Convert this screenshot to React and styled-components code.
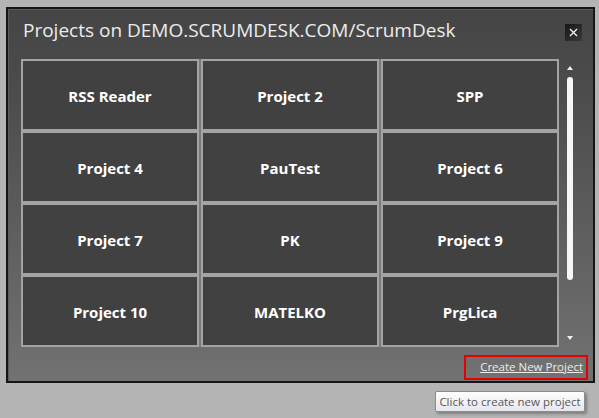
import styled, { createGlobalStyle } from 'styled-components';

const GlobalStyle = createGlobalStyle`
    html, body {
        margin: 0;
        padding: 0;
        background: #b4b4b4;
    }
    body {
        font-family: "Open Sans", "Noto Sans", sans-serif;
    }
`

const Page = styled.div`
    position: relative;
    width: 599px;
    height: 418px;
    padding: 7px 0 0 6px;
    box-sizing: border-box;
`

const Window = styled.div`
    width: 589px;
    height: 376px;
    box-sizing: border-box;
    border: 2px solid #161616;
    box-shadow: inset 1px 1px 0 #5c5c5c;
    background: linear-gradient(to bottom, #454545 0%, #4d4d4d 25%, #727272 100%);
    display: flex;
    flex-direction: column;
`

const Header = styled.div`
    height: 50px;
    display: flex;
    justify-content: space-between;
    align-items: flex-start;
    padding: 0 11px 0 15px;
`

const Title = styled.h1`
    margin: 9px 0 0;
    font-size: 19px;
    line-height: 24px;
    font-weight: 400;
    color: #ececec;
`

const CloseButton = styled.button`
    margin-top: 15px;
    width: 17px;
    height: 17px;
    padding: 0;
    border: none;
    background: linear-gradient(135deg, #161616 0%, #2c2c2c 60%, #383838 100%);
    display: flex;
    align-items: center;
    justify-content: center;
`

const Body = styled.div`
    display: flex;
    height: 288px;
    padding-left: 13px;
`

const Grid = styled.div`
    display: grid;
    grid-template-columns: repeat(3, 178px);
    grid-auto-rows: 72px;
    column-gap: 2px;
    align-content: start;
    background: linear-gradient(to right, transparent 178px, #7c7c7c 178px, #7c7c7c 180px, transparent 180px, transparent 358px, #7c7c7c 358px, #7c7c7c 360px, transparent 360px);
    height: 288px;
`

const Tile = styled.div`
    box-sizing: border-box;
    border: 2px solid #a3a3a3;
    background: #414141;
    display: flex;
    align-items: center;
    justify-content: center;
    color: #ffffff;
    font-weight: 700;
    font-size: 15px;
    padding-top: 2px;
`

const Scrollbar = styled.div`
    width: 7px;
    margin-left: 7px;
    display: flex;
    flex-direction: column;
    align-items: center;
    padding-top: 7px;
`

const Arrow = styled.div`
    width: 0;
    height: 0;
    border-left: 3px solid transparent;
    border-right: 3px solid transparent;
    ${p => p.$down
        ? 'border-top: 4px solid #f0f0f0; margin-top: 56px;'
        : 'border-bottom: 4px solid #f0f0f0;'}
`

const Thumb = styled.div`
    margin-top: 7px;
    width: 6px;
    height: 203px;
    border-radius: 3px;
    background: #f6f6f6;
`

const Footer = styled.div`
    display: flex;
    justify-content: flex-end;
    padding: 8px 5px 0 0;
`

const LinkBox = styled.div`
    width: 124px;
    height: 25px;
    box-sizing: border-box;
    border: 2px solid #e60000;
    display: flex;
    align-items: center;
    justify-content: flex-end;
    padding: 0 3px 2px 0;
`

const Link = styled.a`
    font-size: 11.5px;
    color: #ececec;
    text-decoration: underline;
    cursor: pointer;
`

const Tooltip = styled.div`
    position: absolute;
    left: 435px;
    top: 391px;
    width: 150px;
    height: 21px;
    box-sizing: border-box;
    border: 1px solid #8c8c8c;
    border-radius: 2px;
    background: linear-gradient(to bottom, #ffffff 0%, #e6e6ee 100%);
    box-shadow: 2px 2px 3px rgba(0, 0, 0, 0.3);
    color: #575757;
    font-size: 11.5px;
    display: flex;
    align-items: center;
    justify-content: center;
`

const projects = [
    'RSS Reader', 'Project 2', 'SPP',
    'Project 4', 'PauTest', 'Project 6',
    'Project 7', 'PK', 'Project 9',
    'Project 10', 'MATELKO', 'PrgLica',
]

export default function App() {
    return (
        <Page>
            <GlobalStyle />
            <Window>
                <Header>
                    <Title>Projects on DEMO.SCRUMDESK.COM/ScrumDesk</Title>
                    <CloseButton aria-label="Close">
                        <svg width="9" height="9" viewBox="0 0 9 9">
                            <path d="M1 1 L8 8 M8 1 L1 8" stroke="#f4f4f4" strokeWidth="1.3" />
                        </svg>
                    </CloseButton>
                </Header>
                <Body>
                    <Grid>
                        {projects.map(name => (
                            <Tile key={name}>{name}</Tile>
                        ))}
                    </Grid>
                    <Scrollbar>
                        <Arrow />
                        <Thumb />
                        <Arrow $down />
                    </Scrollbar>
                </Body>
                <Footer>
                    <LinkBox>
                        <Link>Create New Project</Link>
                    </LinkBox>
                </Footer>
            </Window>
            <Tooltip>Click to create new project</Tooltip>
        </Page>
    )
}
